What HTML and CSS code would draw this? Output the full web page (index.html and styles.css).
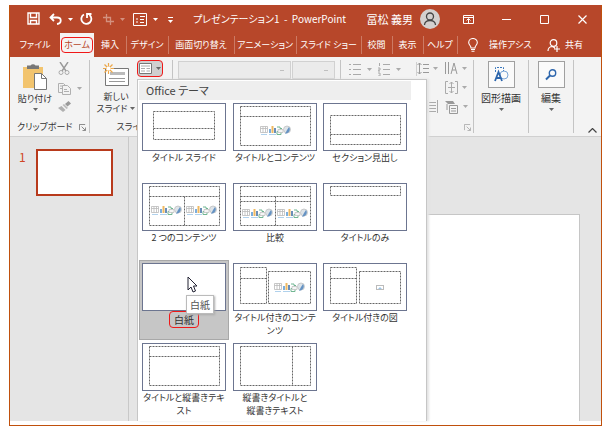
FILE: index.html
```html
<!DOCTYPE html>
<html lang="ja">
<head>
<meta charset="utf-8">
<title>プレゼンテーション1 - PowerPoint</title>
<link rel="stylesheet" href="styles.css">
</head>
<body>
<svg class="defs" aria-hidden="true">
  <symbol id="caret" viewBox="0 0 5 3"><path d="M0 0h5L2.500 3z" fill="currentColor"/></symbol>
  <symbol id="launcher" viewBox="0 0 8 8"><path d="M.5 7V.5H7M3 3l4 4M7.500 4v3.500H4" fill="none" stroke="currentColor"/></symbol>
  <symbol id="content" viewBox="0 0 31 11">
    <path d="M.5 1.500h7v6h-7zM.5 3.500h7M3 1.500v6M5.500 1.500v6" fill="#fff" stroke="#aaa" stroke-width=".8"/>
    <path d="M9 4h2v4H9z" fill="#5b9bd5"/><path d="M11.500 1h2v7h-2z" fill="#eda83a"/><path d="M14 3h2v5h-2z" fill="#4472a8"/>
    <path d="M17 2h3v1.500h2M17 6.500h4v3h-4z" fill="none" stroke="#4fa578"/><path d="M18 4.500h5v3h-5z" fill="#f4f4f4" stroke="#aaa" stroke-width=".7"/>
    <circle cx="27" cy="4.500" r="3.500" fill="#d5dde3" stroke="#aaa" stroke-width=".7"/><path d="M29 2c2 3 0 6-4 7l2-4z" fill="#3f78b5"/>
    <path d="M1 9.500h6M9 9.500h7" stroke="#9dc6e8"/>
  </symbol>
</svg>

<div class="window">
  <header class="titlebar">
    <div class="quick">
      <button aria-label="上書き保存"><svg width="13" height="13" viewBox="0 0 13 13"><path d="M1 1h11v11H1zM3.500 1v4.500h6V1M3.500 12V8.500h6V12" fill="none" stroke="#fff" stroke-width="1.400"/></svg></button>
      <button class="split" aria-label="元に戻す"><svg width="13" height="12" viewBox="0 0 13 12"><path d="M5 1L1.500 4.500 5 8M2 4.500h6c5 0 5 6 0 6.500" fill="none" stroke="#fff" stroke-width="1.800"/></svg><svg class="caret"><use href="#caret"/></svg></button>
      <button aria-label="繰り返し"><svg width="13" height="13" viewBox="0 0 13 13"><path d="M4 2.500A5 5 0 1 0 9.500 3M7 6V2h4.500" fill="none" stroke="#fff" stroke-width="1.800"/></svg></button>
      <button class="split dim" aria-label="トリミング"><svg width="11" height="11" viewBox="0 0 11 11"><path d="M3.500 0v7.500H11M0 3.500h7.500V11" fill="none" stroke="#fff" stroke-width="1.300"/></svg><svg class="caret"><use href="#caret"/></svg></button>
      <button class="split" aria-label="レイアウト"><svg width="14" height="13" viewBox="0 0 14 13"><path d="M.5.5h13v12H.5zM7 3.500h5M7 6.500h4M7 9.500h4" fill="none" stroke="#fff"/><path d="M3 6h2M3 9h2" stroke="#fff"/></svg><svg class="caret"><use href="#caret"/></svg></button>
      <button aria-label="その他"><svg width="5" height="6" viewBox="0 0 5 6"><path d="M0 .5h5" stroke="#fff"/><path d="M0 3h5L2.500 6z" fill="#fff"/></svg></button>
    </div>
    <h1>プレゼンテーション1&nbsp; -&nbsp; PowerPoint</h1>
    <span class="user">冨松 義男</span>
    <button class="avatar" aria-label="アカウント"><svg width="20" height="20" viewBox="0 0 20 20"><circle cx="10" cy="10" r="10" fill="#d3d0cf"/><circle cx="10" cy="7.500" r="3.500" fill="none" stroke="#444" stroke-width="1.300"/><path d="M4.500 16c0-6 11-6 11 0" fill="none" stroke="#444" stroke-width="1.300"/></svg></button>
    <div class="controls">
      <button aria-label="リボンの表示オプション"><svg width="11" height="9" viewBox="0 0 11 9"><path d="M.5.5h10v8H.5zM.5 2.500h10M5.500 8V4M3.500 5.500l2-2 2 2" fill="none" stroke="#fff"/></svg></button>
      <button aria-label="最小化"><svg width="9" height="9" viewBox="0 0 9 9"><path d="M0 4.500h9" stroke="#fff"/></svg></button>
      <button aria-label="最大化"><svg width="9" height="9" viewBox="0 0 9 9"><path d="M.5.5h8v8h-8z" fill="none" stroke="#fff"/></svg></button>
      <button aria-label="閉じる"><svg width="9" height="9" viewBox="0 0 9 9"><path d="M.5.5l8 8M8.500.5l-8 8" stroke="#fff" stroke-width="1.200"/></svg></button>
    </div>
  </header>

  <nav class="tabs">
    <button>ファイル</button>
    <button class="active"><span class="mark">ホーム</span></button>
    <button>挿入</button>
    <button class="sep">デザイン</button>
    <button class="sep">画面切り替え</button>
    <button class="sep">アニメーション</button>
    <button class="sep">スライド ショー</button>
    <button class="sep">校閲</button>
    <button class="sep">表示</button>
    <button class="sep">ヘルプ</button>
    <button class="sep assist"><svg width="10" height="14" viewBox="0 0 10 14"><path d="M3 10C3 7.500.7 7 .7 4.500a4.300 4 0 0 1 8.600 0C9.300 7 7 7.500 7 10zM3 11.500h4M3.500 13.300h3" fill="none" stroke="#fff" stroke-width="1.100"/></svg>操作アシス</button>
    <button class="share"><svg width="13" height="13" viewBox="0 0 13 13"><circle cx="6.500" cy="4" r="3.300" fill="none" stroke="#fff" stroke-width="1.200"/><path d="M1 12c0-3 2-4.500 4.500-4.500L8 9M10 7v6M7 10h6" fill="none" stroke="#fff" stroke-width="1.200"/></svg>共有</button>
  </nav>

  <div class="body">
    <section class="ribbon">
      <div class="group clipboard">
        <div class="tools">
          <button class="big"><svg width="26" height="27" viewBox="0 0 26 27"><path d="M1 4h20v21H1z" fill="#f2c46e"/><path d="M5 6V2.500h3.500a3 3 0 0 1 5 0H17V6z" fill="#777"/><path d="M12.500 10.500h7l5 5v11h-12z" fill="#fff" stroke="#777"/><path d="M19.500 10.500v5h5" fill="none" stroke="#777"/></svg>貼り付け<svg class="caret"><use href="#caret"/></svg></button>
          <div class="stack">
            <button aria-label="切り取り"><svg width="12" height="13" viewBox="0 0 12 13"><path d="M2 0l6 9M10 0L4 9" stroke="#999" stroke-width="1.400"/><circle cx="3" cy="10.500" r="2" fill="none" stroke="#aaa"/><circle cx="9" cy="10.500" r="2" fill="none" stroke="#aaa"/></svg></button>
            <button class="split" aria-label="コピー"><svg width="13" height="12" viewBox="0 0 13 12"><path d="M4 9.500H.5v-9h5l2 2M4.500 2.500h5l3 3v6h-8zM6 6.500h3M6 8.500h5M2 3h2M2 5.500h2" fill="none" stroke="#b0b0b0"/></svg><svg class="caret"><use href="#caret"/></svg></button>
            <button aria-label="書式のコピー/貼り付け"><svg width="13" height="11" viewBox="0 0 13 11"><path d="M10.500 0L13 2.500 9.500 5.500 7 3z" fill="#999"/><path d="M6 3l4 4-1.500 1-4-4z" fill="#bbb"/><path d="M3.500 5l4 4L5 11 0 7z" fill="#b0b0b0"/></svg></button>
          </div>
        </div>
        <footer><span>クリップボード</span><svg class="launch"><use href="#launcher"/></svg></footer>
      </div>

      <div class="group slides">
        <div class="tools">
          <button class="big"><svg width="27" height="24" viewBox="0 0 27 24"><path d="M2.500 5.500h23v17h-23z" fill="#fff" stroke="#777"/><path d="M7 10.500h15" stroke="#bbb" stroke-width="3"/><path d="M6 15.500h16M6 18.500h16" stroke="#999"/><path d="M5.500 0v11M0 5.500h11M1.500 1.500l8 8M9.500 1.500l-8 8" stroke="#eda84a" stroke-width="1.200"/><circle cx="5.500" cy="5.500" r="2" fill="#fff"/></svg><span>新しい<br>スライド<svg class="caret"><use href="#caret"/></svg></span></button>
          <button class="layout mark" aria-label="レイアウト"><svg width="13" height="11" viewBox="0 0 13 11"><path d="M.5.5h12v10H.5z" fill="#fff" stroke="#777"/><path d="M2 3h9M2 5.500h4M2 8h4M7.500 5.500h3.500M7.500 8h3.500" stroke="#aaa"/></svg><svg class="caret"><use href="#caret"/></svg></button>
        </div>
        <footer><span>スライド</span></footer>
      </div>

      <div class="group font">
        <select class="family" aria-label="フォント" disabled></select><select aria-label="フォント サイズ" disabled></select>
      </div>

      <div class="group paragraph">
        <div class="lists">
          <button class="split" aria-label="箇条書き"><svg width="12" height="13" viewBox="0 0 12 13"><path d="M0 1.500h2M0 6.500h2M0 11.500h2M4 1.500h8M4 6.500h8M4 11.500h8" stroke="#aaa"/></svg><svg class="caret"><use href="#caret"/></svg></button>
          <button class="split" aria-label="段落番号"><svg width="12" height="13" viewBox="0 0 12 13"><path d="M1.500 0v3M0 5h2v2H0v1h2M0 10h2v3H0M5 1.500h7M5 6.500h7M5 11.500h7" fill="none" stroke="#aaa"/></svg><svg class="caret"><use href="#caret"/></svg></button>
        </div>
        <div class="spacing">
          <button class="split" aria-label="行間"><svg width="12" height="13" viewBox="0 0 12 13"><path d="M2.500 1v11M.5 3l2-2 2 2M.5 10l2 2 2-2M6 2.500h6M6 6.500h6M6 10.500h6" fill="none" stroke="#999"/></svg><svg class="caret"><use href="#caret"/></svg></button>
          <button class="split" aria-label="文字列の方向"><svg width="13" height="13" viewBox="0 0 13 13"><path d="M.5 0v12M3.500 0v12M6 12l3-11 3 11M7 8h4" fill="none" stroke="#999"/></svg><svg class="caret"><use href="#caret"/></svg></button>
          <span></span>
          <button class="split" aria-label="文字の配置"><svg width="13" height="13" viewBox="0 0 13 13"><path d="M3 .5H.5v12H3M10 .5h2.500v12H10M6.500 1v11M4.500 3l2-2 2 2M4.500 10l2 2 2-2M3 6.500h7" fill="none" stroke="#aaa"/></svg><svg class="caret"><use href="#caret"/></svg></button>
          <button class="split" aria-label="段組み"><svg width="21" height="13" viewBox="0 0 21 13"><path d="M10.500 0v13M20.500 0v13M12 2.500h7M12 5.500h7M12 8.500h7M12 11.500h7" stroke="#aaa"/></svg></button>
          <button class="split" aria-label="SmartArt に変換"><svg width="14" height="14" viewBox="0 0 14 14"><path d="M0 1h8l2 3H3z" fill="#999"/><path d="M4.500 5.500h8v8h-8zM6 8.500h5M6 11h5M2 4v6" fill="none" stroke="#999"/></svg><svg class="caret"><use href="#caret"/></svg></button>
        </div>
        <svg class="launch"><use href="#launcher"/></svg>
      </div>

      <div class="group tile">
        <button><span class="frame"><svg width="15" height="15" viewBox="0 0 15 15"><path d="M1.500 5V.5h8V4" fill="none" stroke="#3b78bd" stroke-dasharray="2 1"/><circle cx="10" cy="8" r="4" fill="none" stroke="#7aa5d6"/><path d="M1 14L4.500 5 8 14M2.500 11h4" fill="none" stroke="#2d66ad" stroke-width="1.800"/></svg></span>図形描画<svg class="caret"><use href="#caret"/></svg></button>
      </div>
      <div class="group tile">
        <button><span class="frame"><svg width="12" height="12" viewBox="0 0 12 12"><circle cx="7.500" cy="4" r="3.200" fill="none" stroke="#2d66ad" stroke-width="1.400"/><path d="M5 6.500L1 10.500" stroke="#2d66ad" stroke-width="2"/></svg></span>編集<svg class="caret"><use href="#caret"/></svg></button>
      </div>
      <div class="group collapse">
        <button aria-label="リボンを折りたたむ"><svg width="9" height="5" viewBox="0 0 9 5"><path d="M.5 4.500l4-4 4 4" fill="none" stroke="#444" stroke-width="1.200"/></svg></button>
      </div>
    </section>

    <main class="workspace">
      <aside class="slide-list">
        <span>1</span>
        <button aria-label="スライド 1"></button>
      </aside>
      <div class="canvas"><div class="slide"></div></div>
    </main>

    <section class="menu">
      <h2>Office テーマ</h2>
      <div class="layouts">
        <button><svg viewBox="0 0 84 48"><path d="M11.500 8.500h61v28h-61zM11.500 25.500h61"/></svg>タイトル スライド</button>
        <button><svg viewBox="0 0 84 48"><path d="M7.500 3.500h70v39h-70zM7.500 13.500h70"/><use href="#content" x="27" y="22" width="31" height="11"/></svg>タイトルとコンテンツ</button>
        <button><svg viewBox="0 0 84 48"><path d="M7.500 12.500h70v29h-70zM7.500 31.500h70"/></svg>セクション見出し</button>
        <button><svg viewBox="0 0 84 48"><path d="M7.500 3.500h70v39h-70zM7.500 13.500h70M42.500 13.500v29"/><use href="#content" x="9" y="22" width="31" height="11"/><use href="#content" x="44" y="22" width="31" height="11"/></svg>2 つのコンテンツ</button>
        <button><svg viewBox="0 0 84 48"><path d="M7.500 3.500h70v39h-70zM7.500 13.500h70M7.500 18.500h70M42.500 13.500v29"/><use href="#content" x="9" y="25" width="31" height="11"/><use href="#content" x="44" y="25" width="31" height="11"/></svg>比較</button>
        <button><svg viewBox="0 0 84 48"><path d="M7.500 3.500h70v9h-70z"/></svg>タイトルのみ</button>
        <button class="selected"><svg viewBox="0 0 84 48"></svg><span class="mark">白紙</span>
          <svg class="cursor" viewBox="0 0 11 17"><path d="M1 1v13l3-3 2 5 2.500-1L6.500 10H10z" fill="#fff" stroke="#223"/></svg>
          <span class="tooltip" role="tooltip">白紙</span></button>
        <button><svg viewBox="0 0 84 48"><path d="M7.500 4.500h26v36h-26zM7.500 15.500h26M35.500 8.500h42v32h-42z"/><use href="#content" x="41" y="19" width="31" height="11"/></svg>タイトル付きのコンテ<br>ンツ</button>
        <button><svg viewBox="0 0 84 48"><path d="M7.500 4.500h26v36h-26zM7.500 15.500h26M36.500 8.500h41v32h-41z"/><rect x="53.500" y="22.500" width="7" height="4"/><path class="pic" d="M55 26l2-2 2 2z"/></svg>タイトル付きの図</button>
        <button><svg viewBox="0 0 84 48"><path d="M7.500 3.500h70v39h-70zM7.500 13.500h70"/></svg>タイトルと縦書きテキ<br>スト</button>
        <button><svg viewBox="0 0 84 48"><path d="M7.500 3.500h70v39h-70zM59.500 3.500v39"/></svg>縦書きタイトルと<br>縦書きテキスト</button>
      </div>
    </section>
  </div>
</div>
</body>
</html>
```

FILE: styles.css
```css
* { box-sizing: border-box; }

body {
  margin: 0;
  height: 100vh;
  padding: 5px 11px 5px 9px;
  background: #fff;
  color: #333;
  font: 10px/12px "Noto Sans CJK JP", sans-serif;
  font-feature-settings: "palt";
}

button {
  margin: 0;
  padding: 0;
  border: 0;
  background: none;
  color: inherit;
  font: inherit;
  font-feature-settings: inherit;
  white-space: nowrap;
}

svg { flex: none; }
.defs { position: absolute; width: 0; height: 0; }
.caret { width: 5px; height: 3px; }
.ribbon .caret { color: #666; }
.launch { width: 7px; height: 7px; color: #777; }

.split {
  display: flex;
  align-items: center;
  justify-content: center;
  gap: 6px;
}

.mark {
  border: 1px solid #f01818;
  border-radius: 4px;
}

.window {
  display: flex;
  flex-direction: column;
  height: 100%;
  padding-bottom: 4px;
  border: 1px solid #c0500c;
  border-top: 0;
}

/* Title bar */
.titlebar {
  display: flex;
  align-items: center;
  height: 28px;
  padding-left: 9px;
  background: #b7472a;
  color: #fff;
}

.quick {
  display: grid;
  grid-template-columns: 28px 28px 22px 34px 28px 22px;
  align-items: center;
  justify-items: center;
}

.dim { opacity: .4; }

h1 {
  flex: 1;
  margin: 0;
  padding-left: 12px;
  font-size: 10px;
  font-weight: 400;
  white-space: nowrap;
}

.user { font-size: 11px; }
.avatar { display: flex; margin: 0 9px 0 7px; }
.controls { display: grid; grid-template-columns: repeat(4, 38px); }
.controls button { display: grid; place-items: center; }

/* Ribbon tabs */
.tabs {
  display: grid;
  grid-template-columns:
    minmax(0, 50fr) minmax(0, 34fr) minmax(0, 32fr) minmax(0, 42fr)
    minmax(0, 66fr) minmax(0, 62fr) minmax(0, 65fr) minmax(0, 31fr)
    minmax(0, 31fr) minmax(0, 34fr) minmax(0, 77fr) minmax(0, 67fr);
  height: 24px;
  background: #b7472a;
  color: #fff;
  font-size: 9px;
}

.tabs button {
  display: flex;
  align-items: center;
  justify-content: center;
}

.tabs .sep {
  background: linear-gradient(#cc7a64, #cc7a64) left center / 1px 18px no-repeat;
}

.tabs .active { background: #f5f4f3; color: #b7472a; }
.tabs .mark { padding: 1px 2px; }
.tabs .assist { gap: 11px; padding-left: 11px; justify-content: flex-start; }
.tabs .share { gap: 5px; padding-right: 5px; }

/* Ribbon */
.body {
  position: relative;
  display: flex;
  flex: 1;
  flex-direction: column;
  min-height: 0;
}

.ribbon {
  display: grid;
  grid-template-columns: 80px 83px 168px 133px 55px 45px 1fr;
  height: 80px;
  padding: 3px 0;
  border-bottom: 1px solid #d0d0d0;
  background: #f3f3f3;
}

.group {
  display: flex;
  flex-direction: column;
  justify-content: space-between;
  border-right: 1px solid #c4c4c4;
}

.tools { display: flex; align-items: flex-start; }

.big {
  display: flex;
  flex-direction: column;
  align-items: center;
  gap: 3px;
  padding-top: 3px;
}

.clipboard, .slides { font-size: 9px; }
.clipboard .big { width: 46px; }
.slides .big { width: 47px; padding-left: 5px; gap: 4px; }
.slides .big .caret { margin: 0 0 2px 3px; }

.stack {
  display: grid;
  grid-template-rows: repeat(3, 19px);
  justify-items: start;
  align-items: center;
}

.clipboard { padding-left: 2px; }
.stack .caret, .paragraph .caret { color: #aaa; }

footer {
  display: flex;
  align-items: center;
  justify-content: space-between;
  padding: 0 3px 0 5px;
}

.slides footer { justify-content: center; }

.layout {
  display: flex;
  align-items: center;
  justify-content: center;
  gap: 4px;
  width: 26px;
  height: 17px;
  background: #d0cfcf;
}

.group.font {
  display: grid;
  grid-template-columns: 113px 43px;
  align-items: start;
  padding: 1px 5px;
}

select {
  height: 18px;
  border: 1px solid #c4c4c4;
  appearance: none;
  background: linear-gradient(#aaa, #aaa) right 6px center / 4px 1px no-repeat #e8e8e8;
}

.paragraph {
  position: relative;
  display: grid;
  grid-template-columns: 68px 1fr;
  align-items: start;
  padding: 2px 6px 0 8px;
}

.lists { display: flex; gap: 6px; padding-top: 1px; border-right: 1px solid #d0d0d0; }

.spacing {
  display: grid;
  grid-template-columns: 28px 22px;
  grid-auto-rows: 13px;
  row-gap: 6px;
  justify-content: end;
}

.spacing .split { justify-content: start; gap: 4px; }
.paragraph .launch { position: absolute; right: 2px; bottom: 2px; color: #aaa; }

.tile { align-items: center; justify-content: flex-start; }

.tile button {
  display: flex;
  flex-direction: column;
  align-items: center;
  gap: 4px;
}

.frame {
  display: grid;
  place-items: center;
  width: 27px;
  height: 27px;
  margin-top: 1px;
  border: 1px solid #a0a0a0;
  background: #fafafa;
}

.collapse {
  align-items: flex-end;
  justify-content: flex-end;
  padding-right: 4px;
  border: 0;
}

.collapse button { display: flex; }

/* Workspace */
.workspace {
  display: flex;
  flex: 1;
  min-height: 0;
  background: #e5e5e5;
}

.slide-list {
  display: flex;
  align-items: flex-start;
  gap: 8px;
  width: 119px;
  padding: 12px 0 0 9px;
  border-right: 1px solid #c8c8c8;
  color: #d04525;
  font-size: 12px;
}

.slide-list span { width: 9px; line-height: 16px; }

.slide-list button {
  width: 77px;
  height: 47px;
  border: 2px solid #b83a1c;
  background: #fff;
}

.canvas { flex: 1; padding: 77px 21px 0 30px; }

.slide {
  height: 100%;
  border: 1px solid #c6c6c6;
  border-bottom: 0;
  background: #fff;
}

/* Layout gallery */
.menu {
  position: absolute;
  top: 22px;
  bottom: 0;
  left: 127px;
  width: 290px;
  padding: 1px;
  border: 1px solid #c6c6c6;
  border-bottom: 0;
  background: #fff;
  box-shadow: 2px 0 2px #e4e4e4;
}

h2 {
  width: 272px;
  margin: 0;
  padding: 0 7px;
  background: #eee;
  color: #444;
  font-size: 11px;
  font-weight: 400;
  line-height: 19px;
}

.layouts {
  display: grid;
  grid-template-columns: 91px 90px 90px;
  grid-auto-rows: 80px;
  font-size: 9px;
  line-height: 13px;
}

.layouts button {
  position: relative;
  display: flex;
  flex-direction: column;
  align-items: center;
  justify-self: start;
  width: 90px;
  padding-top: 2px;
  border: 1px solid transparent;
}

.layouts button > svg:first-child {
  width: 84px;
  height: 48px;
  outline: 1px solid #6c7590;
  outline-offset: -1px;
  background: #fff;
}

.layouts use { opacity: .8; }
.layouts path, .layouts rect { fill: none; stroke: #666; stroke-dasharray: 2 1; }
.layouts rect { stroke: #bbb; stroke-dasharray: none; }
.layouts .pic { fill: #9dc6e8; stroke: none; }

.layouts .selected { border-color: #a8a8a8; background: #c6c6c6; font-size: 10px; }
.selected .mark { padding: 1px 4px; }

.layouts .cursor { position: absolute; top: 15px; left: 47px; width: 11px; height: 17px; }
.layouts .cursor path { fill: #fff; stroke: #223; stroke-dasharray: none; }

.tooltip {
  position: absolute;
  top: 34px;
  left: 46px;
  padding: 2px 3px;
  border: 1px solid #bbb;
  background: #fff;
  color: #555;
  box-shadow: 1px 1px 2px #aaa;
}
```
